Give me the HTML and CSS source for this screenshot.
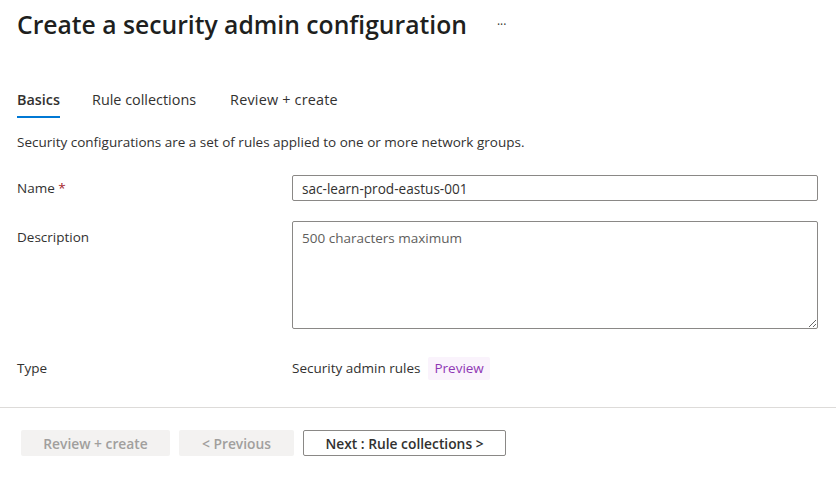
FILE: index.html
```html
<!DOCTYPE html>
<html>
<head>
<meta charset="utf-8">
<link rel="stylesheet" href="styles.css">
</head>
<body>
<div class="page">
  <header class="header">
    <h1 class="title">Create a security admin configuration</h1>
    <span class="more">···</span>
  </header>
  <nav class="tabs">
    <span class="tab active">Basics</span>
    <span class="tab">Rule collections</span>
    <span class="tab">Review + create</span>
  </nav>
  <p class="intro">Security configurations are a set of rules applied to one or more network groups.</p>
  <div class="form">
    <div class="row row-name">
      <label class="label">Name <span class="req">*</span></label>
      <div class="field"><input class="input" type="text" value="sac-learn-prod-eastus-001"></div>
    </div>
    <div class="row row-desc">
      <label class="label">Description</label>
      <div class="field"><textarea class="textarea" placeholder="500 characters maximum"></textarea></div>
    </div>
    <div class="row row-type">
      <label class="label">Type</label>
      <div class="field type-val"><span>Security admin rules</span><span class="badge">Preview</span></div>
    </div>
  </div>
</div>
<footer class="footer">
  <button class="btn disabled">Review + create</button>
  <button class="btn disabled prev">&lt; Previous</button>
  <button class="btn primary">Next : Rule collections &gt;</button>
</footer>
</body>
</html>
```
FILE: styles.css
```css
html, body {
  margin: 0;
  padding: 0;
  background: #ffffff;
}
body {
  font-family: "Open Sans", "Noto Sans", sans-serif;
  color: #323130;
  font-size: 13.5px;
  width: 836px;
  height: 478px;
  overflow: hidden;
}
.page {
  padding: 0 18px 0 17px;
}
.header {
  display: flex;
  align-items: center;
  height: 48px;
}
.title {
  margin: 0;
  font-size: 24.7px;
  font-weight: 600;
  color: #201f1e;
}
.more {
  margin-left: 30px;
  font-size: 12px;
  color: #323130;
}
.tabs {
  display: flex;
  gap: 32px;
  margin-top: 40px;
  height: 32px;
}
.tab {
  font-size: 14.4px;
  line-height: 24px;
  color: #323130;
  position: relative;
  height: 30px;
}
.tab:nth-child(3) {
  margin-left: 2px;
  letter-spacing: 0.2px;
}
.tab.active {
  font-weight: 600;
}
.tab.active::after {
  content: "";
  position: absolute;
  left: 0;
  right: 0;
  top: 28px;
  height: 2px;
  background: #0078d4;
}
.intro {
  margin: 12px 0 0 0;
  font-size: 13.5px;
  line-height: 20px;
}
.form {
  margin-top: 23px;
  display: flex;
  flex-direction: column;
}
.row {
  display: grid;
  grid-template-columns: 275px 526px;
}
.label {
  font-size: 13.5px;
  line-height: 26px;
}
.req {
  color: #a4262c;
}
.row-desc {
  margin-top: 20px;
}
.row-desc .label {
  line-height: 32px;
}
.row-type {
  margin-top: 26px;
  align-items: center;
  height: 24px;
}
.input {
  box-sizing: border-box;
  width: 526px;
  height: 26px;
  border: 1px solid #8a8886;
  border-radius: 2px;
  padding: 0 9px;
  font-family: inherit;
  font-size: 13.6px;
  color: #323130;
  outline: none;
  margin: 0;
  display: block;
}
.textarea {
  box-sizing: border-box;
  width: 526px;
  height: 108px;
  border: 1px solid #8a8886;
  border-radius: 2px;
  padding: 7px 9px;
  font-family: inherit;
  font-size: 13.5px;
  color: #323130;
  outline: none;
  margin: 0;
  display: block;
  resize: both;
}
.textarea::placeholder {
  color: #605e5c;
  opacity: 1;
}
.type-val {
  display: flex;
  align-items: center;
  gap: 8px;
  font-size: 13.5px;
}
.badge {
  background: #faf3fc;
  color: #8f37b4;
  padding: 0 6px;
  line-height: 23px;
  border-radius: 2px;
}
.footer {
  margin-top: 28px;
  border-top: 1px solid #dddbd9;
  padding: 22px 0 0 21px;
  display: flex;
  gap: 9px;
}
.btn {
  box-sizing: border-box;
  height: 26px;
  font-family: inherit;
  font-size: 13.8px;
  font-weight: 600;
  border-radius: 2px;
  padding: 0;
  margin: 0;
}
.btn.disabled {
  background: #f3f2f1;
  color: #a19f9d;
  border: none;
  width: 149px;
}
.btn.prev {
  width: 115px;
}
.btn.primary {
  background: #ffffff;
  color: #323130;
  border: 1px solid #8a8886;
  width: 203px;
}
```
